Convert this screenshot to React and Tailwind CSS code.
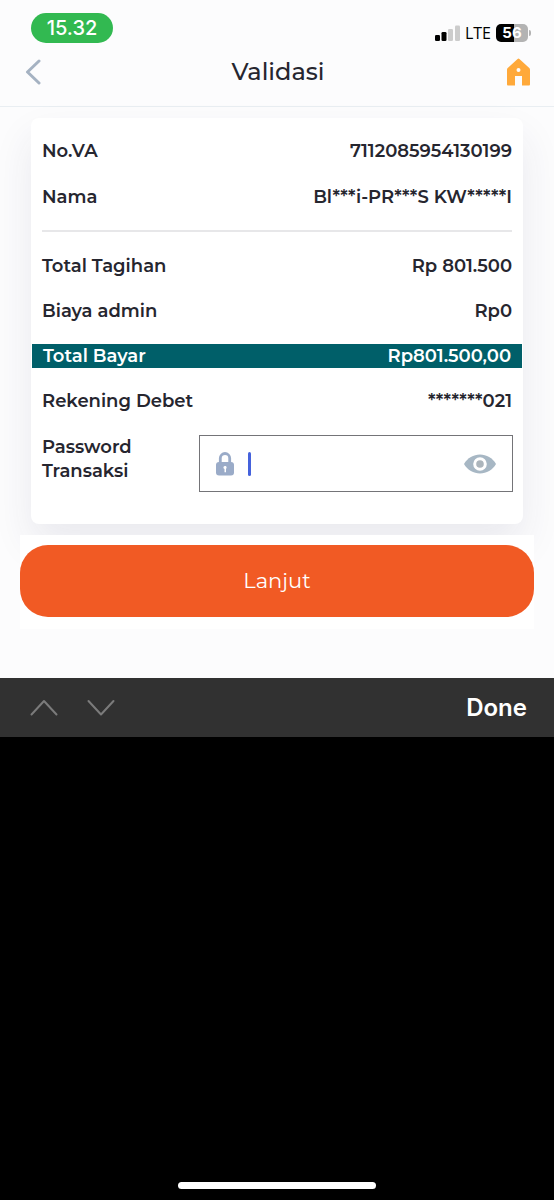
const bill = [
  { label: "Total Tagihan", value: "Rp 801.500" },
  { label: "Biaya admin", value: "Rp0" },
  { label: "Total Bayar", value: "Rp801.500,00", highlight: true },
  { label: "Rekening Debet", value: "*******021" },
];

function Row({ label, value, highlight }) {
  return (
    <div
      className={
        highlight
          ? "-mx-[9px] flex justify-between bg-[#005f69] px-[11px] text-white"
          : "flex justify-between px-px"
      }
    >
      <dt>{label}</dt>
      <dd>{value}</dd>
    </div>
  );
}

function StatusBar() {
  return (
    <div className="flex items-start justify-between pt-[13px] pr-[23px] pl-[31px] font-[Inter,sans-serif]">
      <div className="flex h-[30px] w-[82px] items-center justify-center rounded-full bg-[#32b951] text-[20px] leading-6 font-medium text-white">
        15.32
      </div>
      <div className="mt-2 flex h-6 items-center">
        <svg width="25" height="16" viewBox="0 0 25 16" aria-hidden="true">
          <rect x="0" y="10" width="5" height="6" rx="1.3" fill="#000" />
          <rect x="6.5" y="7" width="5" height="9" rx="1.3" fill="#000" />
          <rect x="13" y="4" width="5" height="12" rx="1.3" fill="#ccc" />
          <rect x="20" y="0.5" width="5" height="15.5" rx="1.3" fill="#ccc" />
        </svg>
        <span className="ml-[5px] font-['Open_Sans',sans-serif] text-[16px] leading-6 font-medium text-black">LTE</span>
        <div className="ml-[5px] flex items-center">
          <div className="flex h-[18px] w-8 items-center justify-center rounded-[5px] bg-[linear-gradient(90deg,#000_56%,#b3b3b3_56%)] text-[15px] leading-[18px] font-bold text-white">
            56
          </div>
          <div className="ml-px h-[6px] w-[2px] rounded-r-full bg-[#b3b3b3]" />
        </div>
      </div>
    </div>
  );
}

export default function App() {
  return (
    <div className="flex min-h-screen flex-col bg-black font-[Montserrat,Inter,sans-serif] text-[#26262f]">
      <div className="bg-[#fcfcfd] pb-[49px]">
        <header className="border-b border-[#e9eef2] pb-[18px]">
          <StatusBar />
          <div className="mt-[11px] grid grid-cols-[1fr_auto_1fr] items-center pr-[23px] pl-[25px]">
            <button type="button" aria-label="Kembali" className="justify-self-start">
              <svg width="17" height="26" viewBox="0 0 17 26" fill="none" aria-hidden="true">
                <path d="M14 2 2.5 13 14 24" stroke="#a5b2c2" strokeWidth="3" strokeLinecap="round" strokeLinejoin="round" />
              </svg>
            </button>
            <h1 className="text-[24px] leading-8 font-medium">Validasi</h1>
            <button type="button" aria-label="Beranda" className="justify-self-end">
              <svg width="25" height="28" viewBox="0 0 25 28" aria-hidden="true">
                <path
                  fill="#ffa93a"
                  fillRule="evenodd"
                  d="M11.6 .9a1.300 1.300 0 0 1 1.800 0l9.900 9.200c.5.5.7 1 .7 1.700v14.400c0 .8-.5 1.300-1.300 1.300H16V18H9v9.500H2.300C1.500 27.500 1 27 1 26.200V11.800c0-.7.2-1.200.7-1.700ZM12.500 10a2 2 0 1 0 0 4 2 2 0 0 0 0-4Z"
                />
              </svg>
            </button>
          </div>
        </header>

        <main>
          <section className="mx-[31px] mt-[11px] rounded-lg bg-white px-[10px] pt-[21px] pb-8 text-[18px] leading-6 font-semibold shadow-[0_20px_40px_rgba(40,40,90,0.09)]">
            <dl className="flex flex-col gap-[22px]">
              <Row label="No.VA" value="7112085954130199" />
              <Row label="Nama" value="Bl***i-PR***S KW*****I" />
            </dl>
            <hr className="mx-px mt-[21px] mb-[22px] border-t-2 border-[#e7e7e9]" />
            <dl className="flex flex-col gap-[21px]">
              {bill.map((item) => (
                <Row key={item.label} {...item} />
              ))}
            </dl>
            <div className="mt-[22px] flex items-start">
              <label htmlFor="password" className="w-[158px] shrink-0 pr-10 pl-px">
                Password Transaksi
              </label>
              <div className="flex h-[57px] min-w-0 flex-1 items-center border border-[#747478] px-4">
                <svg width="18" height="24" viewBox="0 0 18 24" className="shrink-0" aria-hidden="true">
                  <path d="M4.300 12V6.200a4.700 4.700 0 0 1 9.400 0V12" fill="none" stroke="#9aabc8" strokeWidth="2.800" />
                  <rect x="0" y="10" width="18" height="13.500" rx="3" fill="#9aabc8" />
                  <path d="M7.400 15.500a1.600 1.600 0 1 1 2.600 1.300v3.400H8.500v-3.300a1.600 1.600 0 0 1-1.100-1.400Z" fill="#fff" />
                </svg>
                <span className="ml-[14px] h-6 w-[3px] shrink-0 rounded-full bg-[#4562dc]" />
                <input id="password" type="password" className="h-full min-w-0 flex-1 bg-transparent px-1 outline-none" />
                <button type="button" aria-label="Tampilkan password" className="shrink-0">
                  <svg width="32" height="20" viewBox="0 0 32 20" aria-hidden="true">
                    <path d="M0 10C3.500 4 9.500.5 16 .5S28.500 4 32 10c-3.500 6-9.500 9.500-16 9.500S3.500 16 0 10Z" fill="#a7b7c4" />
                    <circle cx="16" cy="10" r="5.300" fill="#acb5bc" stroke="#fff" strokeWidth="3" />
                  </svg>
                </button>
              </div>
            </div>
          </section>

          <div className="relative mx-5 mt-[11px] bg-white pt-[10px] pb-3">
            <button
              type="button"
              className="h-[72px] w-full rounded-[28px] bg-[#f15a24] text-[21px] leading-8 font-normal text-white"
            >
              Lanjut
            </button>
          </div>
        </main>
      </div>

      <div className="flex h-[59px] items-center bg-[#313131] pr-[27px] pl-[30px] font-[Inter,sans-serif]">
        <button type="button" aria-label="Sebelumnya">
          <svg width="28" height="17" viewBox="0 0 28 17" fill="none" aria-hidden="true">
            <path d="M1.500 15.500 14 2l12.500 13.500" stroke="#7b7b7b" strokeWidth="2" strokeLinecap="round" strokeLinejoin="round" />
          </svg>
        </button>
        <button type="button" aria-label="Berikutnya" className="ml-[29px]">
          <svg width="28" height="17" viewBox="0 0 28 17" fill="none" aria-hidden="true">
            <path d="M1.500 2 14 15.500 26.500 2" stroke="#7b7b7b" strokeWidth="2" strokeLinecap="round" strokeLinejoin="round" />
          </svg>
        </button>
        <button type="button" className="ml-auto text-[24px] leading-8 font-semibold text-white">
          Done
        </button>
      </div>

      <div className="flex flex-1 items-end justify-center pb-[11px]">
        <div className="h-[7px] w-[198px] rounded-full bg-white" />
      </div>
    </div>
  );
}
